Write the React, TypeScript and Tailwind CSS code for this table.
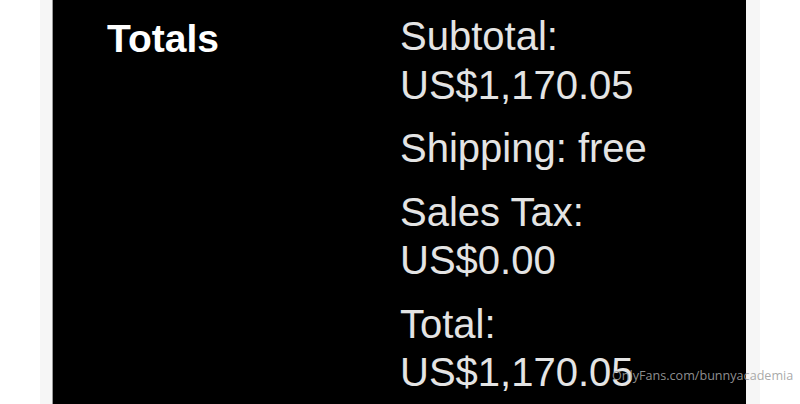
const rows: string[][] = [
  ['Subtotal:', 'US$1,170.05'],
  ['Shipping: free'],
  ['Sales Tax:', 'US$0.00'],
  ['Total:', 'US$1,170.05'],
];

export default function App() {
  return (
    <div
      className="relative flex h-[404px] w-[800px] overflow-hidden bg-white"
      style={{ fontFamily: '"Liberation Sans", Arial, sans-serif' }}
    >
      <div className="w-[40px] shrink-0" />
      <div className="w-[12px] shrink-0 bg-[#f6f6f6]" />
      <div className="flex w-[694px] shrink-0 border-l border-[#9a9a9a] bg-black">
        <div className="w-[347px] shrink-0 pl-[54px] pt-[15px]">
          <h2 className="text-[39px] font-bold leading-[48px] text-white">Totals</h2>
        </div>
        <div className="flex flex-col gap-[15px] pt-[12px]">
          {rows.map((lines, i) => (
            <div key={i} className="text-[40px] leading-[48.5px] text-[#e4e4e4]">
              {lines.map((l) => (
                <div key={l}>{l}</div>
              ))}
            </div>
          ))}
        </div>
      </div>
      <div className="w-[14px] shrink-0 bg-[#f6f6f6]" />
      <div className="flex-1" />
      <div
        className="absolute left-[612px] top-[366px] text-[12.6px] leading-[19px] text-[#a0a0a0]/90"
        style={{ fontFamily: '"Open Sans", sans-serif' }}
      >
        OnlyFans.com/bunnyacademia
      </div>
    </div>
  );
}
